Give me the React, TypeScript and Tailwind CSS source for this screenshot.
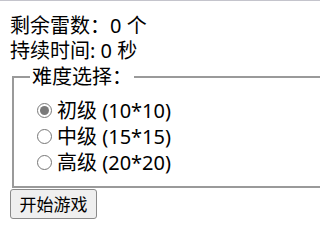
export default function App() {
  const levels = [
    { label: "初级", size: "10*10", checked: true },
    { label: "中级", size: "15*15", checked: false },
    { label: "高级", size: "20*20", checked: false },
  ];

  return (
    <div
      className="min-h-[242px] bg-white border-t border-[#c4c4cc] pl-[10px] pt-[12px] text-[20px] leading-[25px] text-black"
      style={{ fontFamily: '"Noto Sans", "Noto Sans CJK SC", sans-serif' }}
    >
      <p>剩余雷数：0 个</p>
      <p>持续时间: 0 秒</p>
      <fieldset className="ml-[2px] mt-[1px] w-[320px] border-2 border-[#9a9a9a] pl-[23px] pt-[8px] pb-[11px]">
        <legend className="-ml-[7px] px-[2px]">难度选择：</legend>
        {levels.map((l) => (
          <label key={l.label} className="flex items-center h-[26px]">
            <input
              type="radio"
              name="level"
              defaultChecked={l.checked}
              className="m-0 mr-[5px] w-[15px] h-[15px] accent-[#7a7a7a]"
            />
            <span>
              {l.label} ({l.size})
            </span>
          </label>
        ))}
      </fieldset>
      <button className="mt-[1px] h-[30px] w-[87px] text-[17px] leading-none bg-[#efefef] border border-[#8a8a8a] rounded-[3px]">
        开始游戏
      </button>
    </div>
  );
}
